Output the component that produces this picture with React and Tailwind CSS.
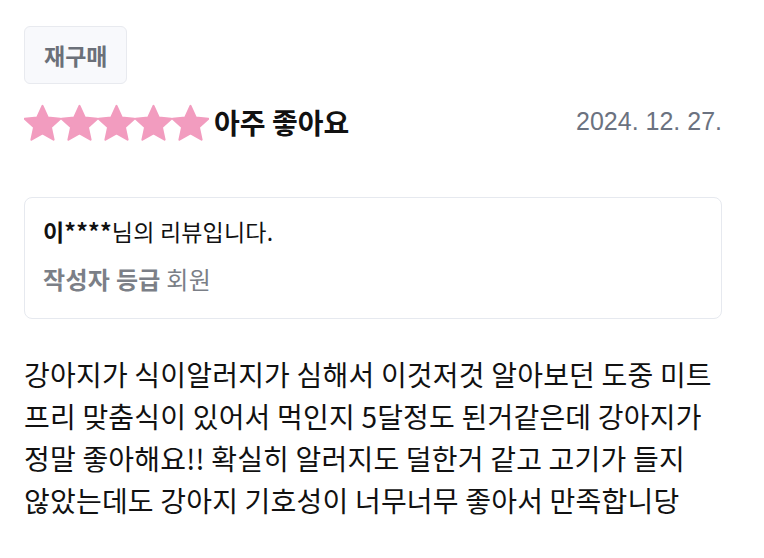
import React from 'react';

const KR = { fontFamily: '"Noto Sans CJK KR", "Noto Sans", sans-serif' };

const Star = () => (
  <svg width="37" height="37" viewBox="2.3 1.6 19.4 19.4" className="shrink-0">
    <path
      d="M12 2.6l2.75 6.05 6.6.7-4.95 4.45 1.4 6.5L12 16.95 6.2 20.3l1.4-6.5-4.95-4.45 6.6-.7z"
      fill="#f29cbf"
      stroke="#f29cbf"
      strokeWidth="1.1"
      strokeLinejoin="round"
    />
  </svg>
);

const App = () => {
  return (
    <div className="w-[764px] h-[558px] bg-white pl-6 pr-[42px] pt-[26px]" style={KR}>
      <span className="inline-flex h-[58px] px-[19px] items-center rounded-md border border-[#e8eaef] bg-[#f8f9fc] text-[23px] font-bold text-[#6b7079]">
        재구매
      </span>

      <div className="flex items-center justify-between mt-[19px] h-[38px]">
        <div className="flex items-center">
          <div className="flex">
            {[0, 1, 2, 3, 4].map((i) => (
              <Star key={i} />
            ))}
          </div>
          <span className="ml-[5px] text-[28px] font-bold text-[#111]">아주 좋아요</span>
        </div>
        <span className="text-[25px] text-[#6b7280]" style={{ fontFamily: '"Liberation Sans", Arial, sans-serif' }}>
          2024. 12. 27.
        </span>
      </div>

      <div className="mt-[56px] rounded-lg border border-[#e6e9ef] px-[18px] pt-[18px] pb-[24px]">
        <p className="text-[23px] text-[#111] leading-[30px] tracking-[0.2px]">
          <span className="font-bold">이****</span>님의 리뷰입니다.
        </p>
        <p className="mt-[18px] text-[24px] leading-[30px] text-[#7b7f87] tracking-[0.3px]">
          <span className="font-bold">작성자 등급</span> 회원
        </p>
      </div>

      <p className="mt-[34px] text-[28px] leading-[42px] text-[#111] tracking-[0.2px] break-keep">
        강아지가 식이알러지가 심해서 이것저것 알아보던 도중 미트 프리 맞춤식이 있어서 먹인지 5달정도 된거같은데 강아지가 정말 좋아해요!! 확실히 알러지도 덜한거 같고 고기가 들지 않았는데도 강아지 기호성이 너무너무 좋아서 만족합니당
      </p>
    </div>
  );
};

export default App;
